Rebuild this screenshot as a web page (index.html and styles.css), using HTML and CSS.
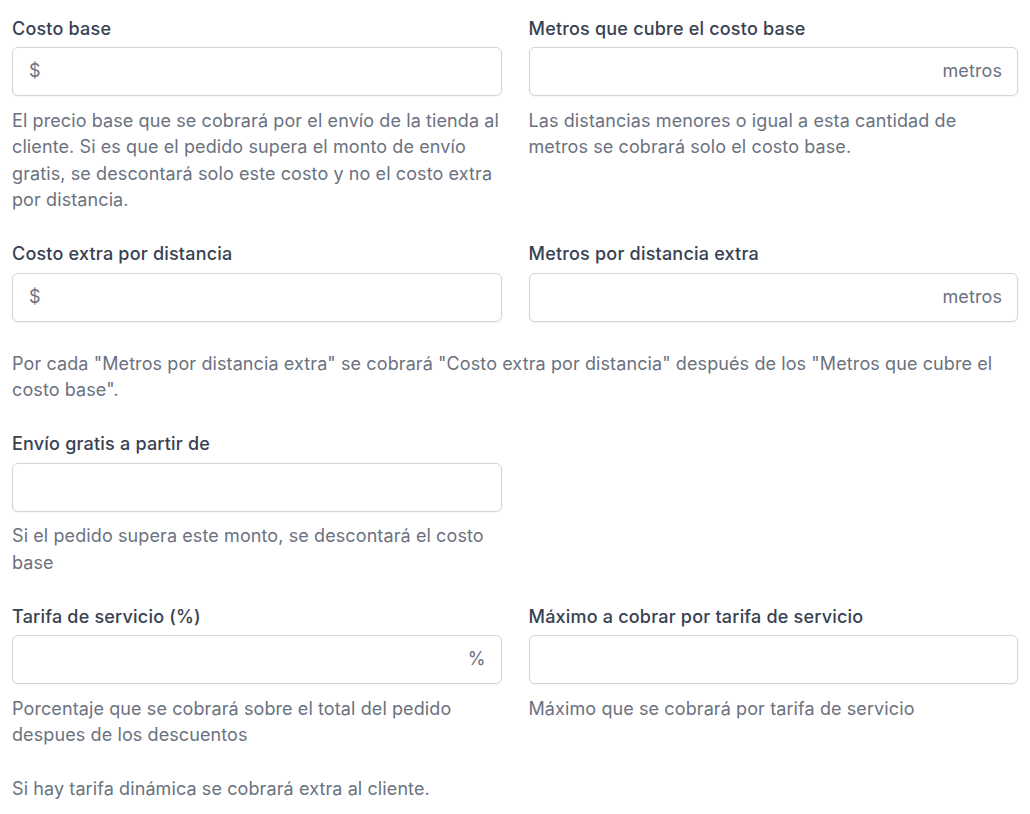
FILE: index.html
```html
<!DOCTYPE html>
<html lang="es">
<head>
    <meta charset="UTF-8">
    <meta name="viewport" content="width=device-width,initial-scale=1">
    <title>Costos de envío</title>
    <link rel="stylesheet" href="styles.css">
</head>
<body>
<main class="form-grid">
    <div class="field">
        <label for="base-cost">Costo base</label>
        <div class="input-wrap">
            <span class="addon addon-left">$</span>
            <input id="base-cost" type="text" class="with-left">
        </div>
        <p class="help">El precio base que se cobrará por el envío de la tienda al cliente. Si es que el pedido supera el monto de envío gratis, se descontará solo este costo y no el costo extra por distancia.</p>
    </div>
    <div class="field">
        <label for="base-meters">Metros que cubre el costo base</label>
        <div class="input-wrap">
            <input id="base-meters" type="text" class="with-right">
            <span class="addon addon-right">metros</span>
        </div>
        <p class="help">Las distancias menores o igual a esta cantidad de metros se cobrará solo el costo base.</p>
    </div>

    <div class="field">
        <label for="extra-cost">Costo extra por distancia</label>
        <div class="input-wrap">
            <span class="addon addon-left">$</span>
            <input id="extra-cost" type="text" class="with-left">
        </div>
    </div>
    <div class="field">
        <label for="extra-meters">Metros por distancia extra</label>
        <div class="input-wrap">
            <input id="extra-meters" type="text" class="with-right">
            <span class="addon addon-right">metros</span>
        </div>
    </div>
    <p class="help full after-inputs">Por cada "Metros por distancia extra" se cobrará "Costo extra por distancia" después de los "Metros que cubre el costo base".</p>

    <div class="field">
        <label for="free-from">Envío gratis a partir de</label>
        <div class="input-wrap">
            <input id="free-from" type="text">
        </div>
        <p class="help">Si el pedido supera este monto, se descontará el costo base</p>
    </div>
    <div></div>

    <div class="field">
        <label for="service-fee">Tarifa de servicio (%)</label>
        <div class="input-wrap">
            <input id="service-fee" type="text" class="with-right">
            <span class="addon addon-right">%</span>
        </div>
        <p class="help">Porcentaje que se cobrará sobre el total del pedido despues de los descuentos</p>
    </div>
    <div class="field">
        <label for="service-max">Máximo a cobrar por tarifa de servicio</label>
        <div class="input-wrap">
            <input id="service-max" type="text">
        </div>
        <p class="help">Máximo que se cobrará por tarifa de servicio</p>
    </div>
    <p class="help full">Si hay tarifa dinámica se cobrará extra al cliente.</p>
</main>
</body>
</html>
```

FILE: styles.css
```css
* {
    margin: 0;
    padding: 0;
    box-sizing: border-box;
}

body {
    font-family: Inter, "Noto Sans", sans-serif;
    font-size: 18px;
    line-height: 26.5px;
    letter-spacing: 0.1px;
    color: #374151;
    background: #fff;
}

.form-grid {
    display: grid;
    grid-template-columns: 1fr 1fr;
    column-gap: 27px;
    row-gap: 27.5px;
    padding: 15.5px 12px;
}

.field label {
    display: block;
    font-weight: 500;
    letter-spacing: 0.2px;
    color: #374151;
    margin-bottom: 5px;
}

.input-wrap {
    position: relative;
}

.input-wrap input {
    display: block;
    width: 100%;
    height: 49px;
    font: inherit;
    color: #111827;
    border: 1px solid #d1d5db;
    border-radius: 6px;
    padding: 0 16px;
    background: #fff;
    box-shadow: 0 1px 2px rgba(0, 0, 0, 0.05);
    outline: none;
}

.input-wrap input.with-left {
    padding-left: 40px;
}

.input-wrap input.with-right {
    padding-right: 80px;
}

.addon {
    position: absolute;
    top: 0;
    bottom: 0;
    display: flex;
    align-items: center;
    color: #6b7280;
    pointer-events: none;
}

.addon-left {
    left: 17px;
}

.addon-right {
    right: 16px;
}

.help {
    color: #6b7280;
    margin-top: 11.5px;
}

.help.full {
    grid-column: span 2;
    margin-top: 0;
}

.help.after-inputs {
    margin-top: 1.5px;
}
```
